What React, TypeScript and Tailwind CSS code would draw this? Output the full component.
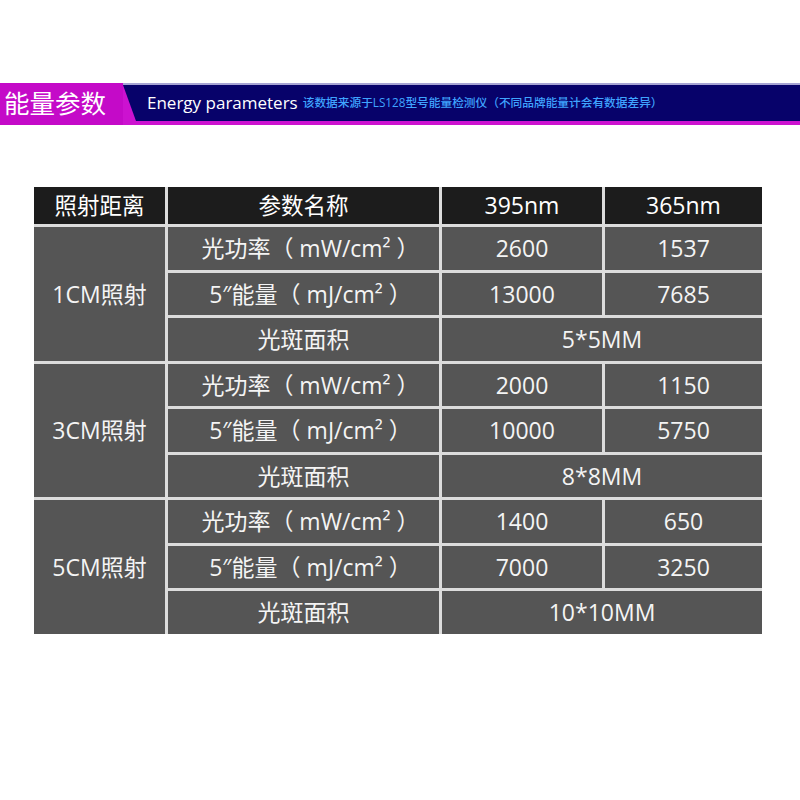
import React from 'react';

const font = { fontFamily: '"Open Sans", "Noto Sans CJK SC", sans-serif' };

interface Group {
  distance: string;
  power: [string, string];
  energy: [string, string];
  spot: string;
}

const groups: Group[] = [
  { distance: '1CM照射', power: ['2600', '1537'], energy: ['13000', '7685'], spot: '5*5MM' },
  { distance: '3CM照射', power: ['2000', '1150'], energy: ['10000', '5750'], spot: '8*8MM' },
  { distance: '5CM照射', power: ['1400', '650'], energy: ['7000', '3250'], spot: '10*10MM' },
];

const Cell: React.FC<{ className?: string; children: React.ReactNode }> = ({ className = '', children }) => (
  <div className={`flex items-center justify-center bg-[#555555] text-[23px] text-[#f4f4f4] whitespace-pre ${className}`}>
    {children}
  </div>
);

export default function App() {
  return (
    <div className="w-[800px] h-[800px] bg-white overflow-hidden" style={font}>
      {/* 标题栏 */}
      <div className="mt-[83px] flex h-[42px]">
        <div className="w-[123px] h-full bg-[#c40ac8] flex items-center pl-[4px]">
          <span className="text-[25.5px] text-white leading-none whitespace-nowrap">能量参数</span>
        </div>
        <div className="flex-1 flex flex-col bg-[#cc12d0]">
          <div className="h-[2px] bg-[#a7a4d4]" />
          <div
            className="h-[36px] bg-[#07026a] flex items-center pl-[24px] gap-[5px] whitespace-nowrap"
            style={{ clipPath: 'polygon(0 0, 100% 0, 100% 100%, 13px 100%)' }}
          >
            <span className="text-[17px] text-white">Energy parameters</span>
            <span className="text-[11.7px] text-[#3fa4ff] font-medium">
              该数据来源于LS128型号能量检测仪（不同品牌能量计会有数据差异）
            </span>
          </div>
        </div>
      </div>

      {/* 参数表 */}
      <div className="mt-[62px] ml-[34px] w-[728px] h-[447px] grid grid-cols-[131px_271px_160px_157px] grid-rows-[37px_repeat(9,1fr)] gap-[3px] bg-[#dcdcdc]">
        <div className="flex items-center justify-center bg-[#1c1c1c] text-[22.5px] text-white">照射距离</div>
        <div className="flex items-center justify-center bg-[#1c1c1c] text-[22.5px] text-white">参数名称</div>
        <div className="flex items-center justify-center bg-[#1c1c1c] text-[23px] text-white">395nm</div>
        <div className="flex items-center justify-center bg-[#1c1c1c] text-[23px] text-white">365nm</div>

        {groups.map((g) => (
          <React.Fragment key={g.distance}>
            <Cell className="row-span-3">{g.distance}</Cell>
            <Cell className="pl-[14px]">光功率（ mW/cm² ）</Cell>
            <Cell>{g.power[0]}</Cell>
            <Cell>{g.power[1]}</Cell>
            <Cell className="pl-[14px]">5″能量（ mJ/cm² ）</Cell>
            <Cell>{g.energy[0]}</Cell>
            <Cell>{g.energy[1]}</Cell>
            <Cell>光斑面积</Cell>
            <Cell className="col-span-2">{g.spot}</Cell>
          </React.Fragment>
        ))}
      </div>
    </div>
  );
}
